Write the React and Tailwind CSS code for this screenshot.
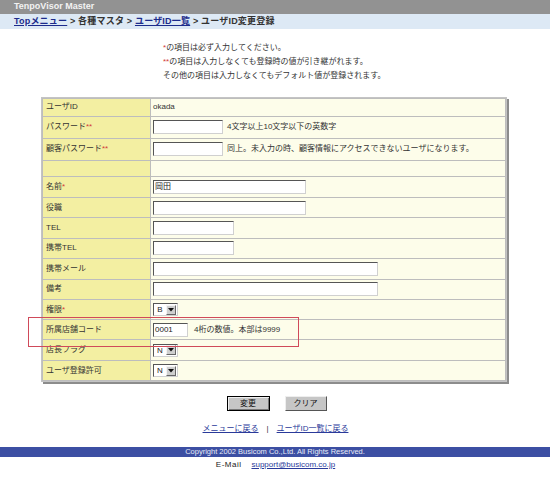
import React from "react";

const F = { fontFamily: "'Liberation Sans','Noto Sans CJK JP',sans-serif" };

function Input({ w, value }) {
  return (
    <div
      className="h-[14px] bg-white border border-t-[#555] border-l-[#555] border-b-[#d0d0d0] border-r-[#d0d0d0] text-[8px] leading-[12px] pl-[1px] text-[#222]"
      style={{ width: w }}
    >
      {value}
    </div>
  );
}

function Select({ v }) {
  return (
    <div className="w-[25px] h-[13px] bg-white border border-t-[#555] border-l-[#555] border-b-[#d0d0d0] border-r-[#d0d0d0] flex items-center">
      <span className="flex-1 text-center text-[8px] leading-[11px] text-[#222]">{v}</span>
      <span className="w-[10px] h-[10px] mr-[1px] bg-[#cfcfcf] border border-t-[#f4f4f4] border-l-[#f4f4f4] border-b-[#666] border-r-[#666] flex items-center justify-center">
        <svg width="6" height="4" viewBox="0 0 6 4"><path d="M0 0H6L3 3.5Z" fill="#111" /></svg>
      </span>
    </div>
  );
}

const R = () => <span className="text-[#d23a3a]">*</span>;
const RR = () => <span className="text-[#d23a3a]">**</span>;

function Row({ label, h, children }) {
  return (
    <div className="flex gap-px" style={{ height: h }}>
      <div className="w-[107px] bg-[#f3efa2] flex items-center pl-[3px] text-[8px] text-[#333]">{label}</div>
      <div className="flex-1 bg-[#fdfdea] flex items-center pl-[2px] text-[8px] text-[#333] gap-[4px]">{children}</div>
    </div>
  );
}

export default function App() {
  return (
    <div className="relative w-[550px] h-[485px] bg-white overflow-hidden" style={F}>
      <div className="h-[14px] bg-[#929292] pl-[14px] flex items-center text-[9px] font-bold text-[#f2f2f2]">
        TenpoVisor Master
      </div>
      <div className="h-[15px] bg-[#dde9f5] pl-[14px] flex items-center text-[9px] font-bold text-[#333] tracking-[0.2px]">
        <span className="underline text-[#1c2b8c]">Topメニュー</span>
        <span>&nbsp;&gt; 各種マスタ &gt;&nbsp;</span>
        <span className="underline text-[#1c2b8c]">ユーザID一覧</span>
        <span>&nbsp;&gt; ユーザID変更登録</span>
      </div>

      <div className="mt-[12px] ml-[163px] text-[8px] leading-[14px] text-[#333]">
        <div><R />の項目は必ず入力してください。</div>
        <div><RR />の項目は入力しなくても登録時の値が引き継がれます。</div>
        <div>その他の項目は入力しなくてもデフォルト値が登録されます。</div>
      </div>

      <div className="mt-[14px] ml-[41px] w-[466px] h-[285px] border border-[#c4c4c4] shadow-[2px_2px_0_#8c8c8c] bg-[#bdbdbd] p-px flex flex-col gap-px">
        <Row label="ユーザID" h={17}>okada</Row>
        <Row label={<>パスワード<RR /></>} h={21}>
          <Input w={70} />
          <span>4文字以上10文字以下の英数字</span>
        </Row>
        <Row label={<>顧客パスワード<RR /></>} h={21}>
          <Input w={70} />
          <span>同上。未入力の時、顧客情報にアクセスできないユーザになります。</span>
        </Row>
        <Row label="" h={16}></Row>
        <Row label={<>名前<R /></>} h={20}><Input w={153} value="岡田" /></Row>
        <Row label="役職" h={19}><Input w={153} /></Row>
        <Row label="TEL" h={20}><Input w={81} /></Row>
        <Row label="携帯TEL" h={19}><Input w={81} /></Row>
        <Row label="携帯メール" h={20}><Input w={225} /></Row>
        <Row label="備考" h={19}><Input w={225} /></Row>
        <Row label={<>権限<R /></>} h={20}><Select v="B" /></Row>
        <Row label="所属店舗コード" h={19}>
          <Input w={35} value="0001" />
          <span className="ml-[2px]">4桁の数値。本部は9999</span>
        </Row>
        <Row label="店長フラグ" h={20}><Select v="N" /></Row>
        <Row label="ユーザ登録許可" h={19}><Select v="N" /></Row>
      </div>

      <div className="mt-[14px] flex justify-center gap-[15px] pl-[3px]">
        <div className="w-[43px] h-[15px] bg-[#c6c6c6] border border-black shadow-[inset_1px_1px_0_#f0f0f0,inset_-1px_-1px_0_#777] flex items-center justify-center text-[8px] text-[#111]">
          変更
        </div>
        <div className="w-[42px] h-[15px] bg-[#c6c6c6] border border-t-[#eee] border-l-[#eee] border-b-[#555] border-r-[#555] flex items-center justify-center text-[8px] text-[#111]">
          クリア
        </div>
      </div>

      <div className="mt-[12px] flex justify-center items-center text-[8px] leading-[12px] text-[#333] pl-[1px]">
        <span className="underline text-[#2a3a9a]">メニューに戻る</span>
        <span className="mx-[8px]">|</span>
        <span className="underline text-[#2a3a9a]">ユーザID一覧に戻る</span>
      </div>

      <div className="mt-[12px] h-[10px] bg-[#3c4fa3] flex items-center justify-center text-[7.5px] text-[#e8ecf8]">
        Copyright 2002 Busicom Co.,Ltd. All Rights Reserved.
      </div>
      <div className="mt-[2px] flex justify-center items-center text-[8px] leading-[12px] text-[#222] pl-[1px]">
        <span className="tracking-[0.5px]">E-Mail</span>
        <span className="ml-[10px] underline text-[#2a3a9a]">support@busicom.co.jp</span>
      </div>

      <div className="absolute left-[28px] top-[317px] w-[271px] h-[30px] border border-[#d04a5a]" />
    </div>
  );
}
